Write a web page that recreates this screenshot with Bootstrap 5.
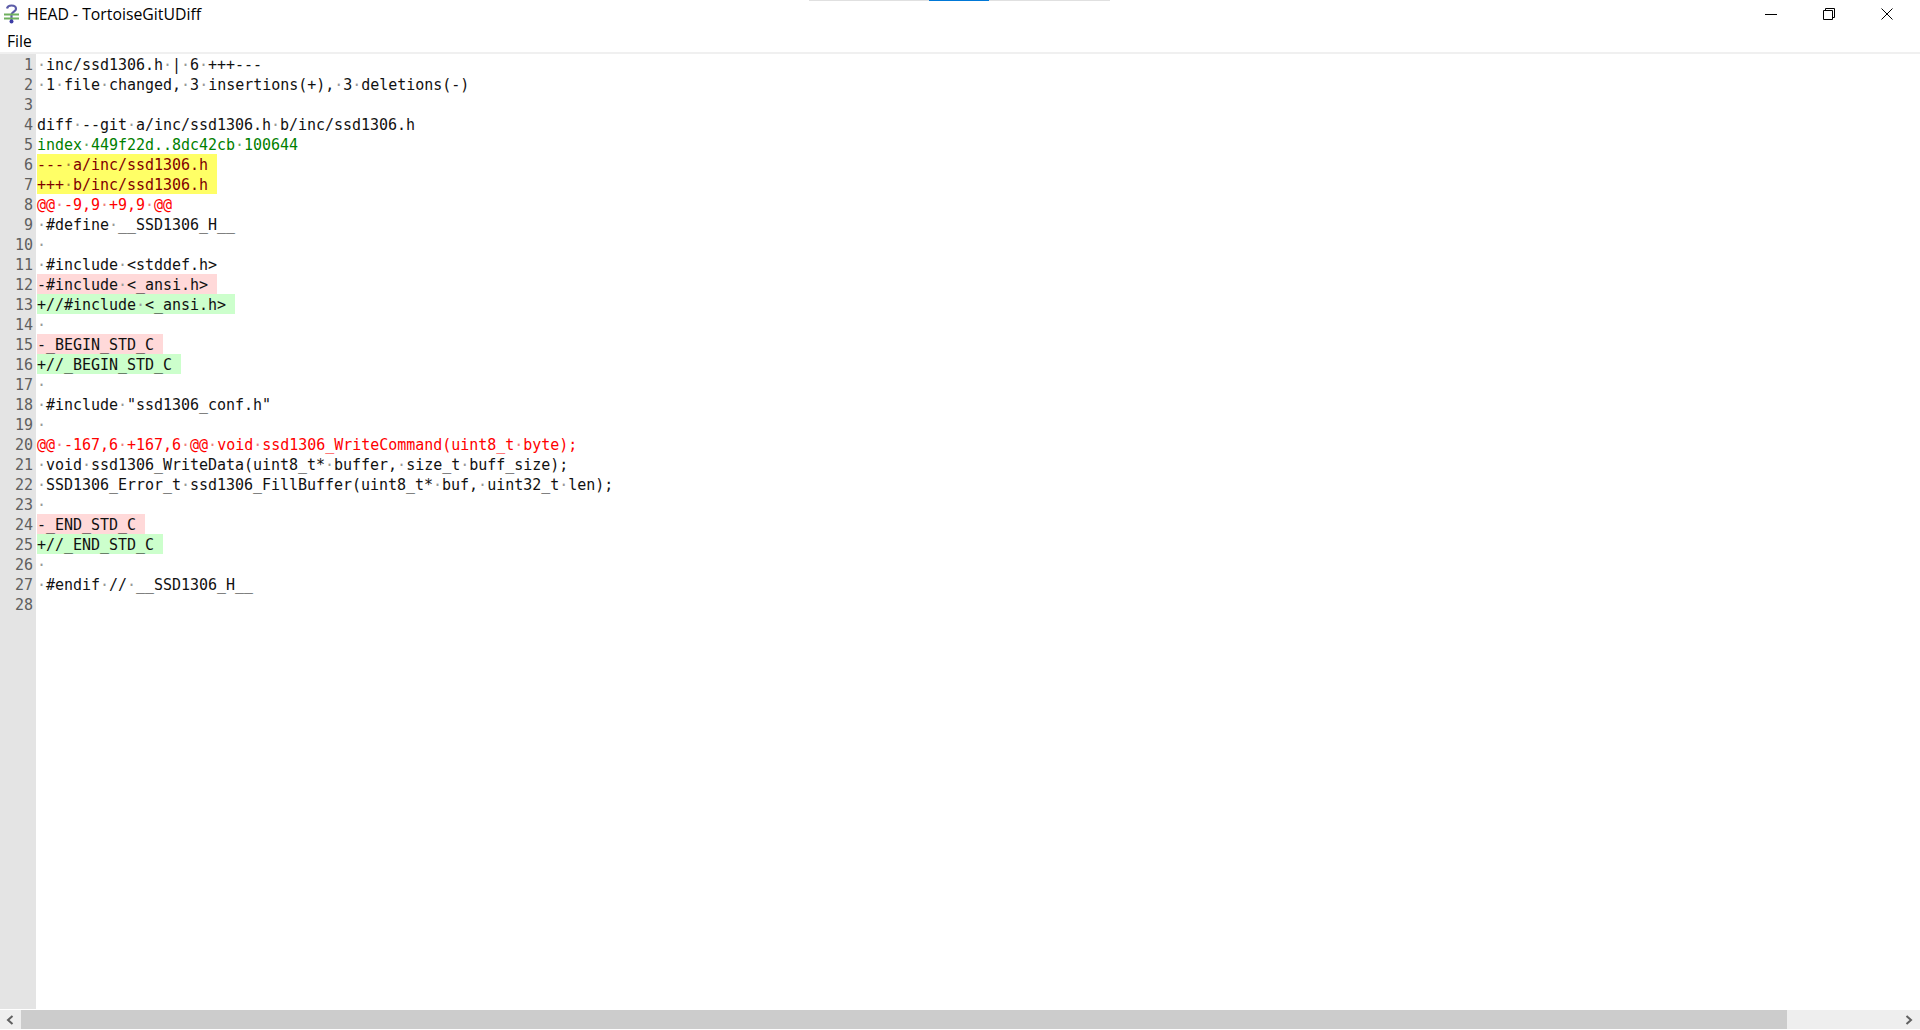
<!DOCTYPE html>
<html lang="en"><head><meta charset="utf-8"><title>HEAD - TortoiseGitUDiff</title>
<link href="https://cdn.jsdelivr.net/npm/bootstrap@5.3.0/dist/css/bootstrap.min.css" rel="stylesheet">
<style>
html,body{height:100%;margin:0;overflow:hidden;background:#fff}
.win{height:1030px;font-family:"Open Sans","Noto Sans",sans-serif;color:#000}
.accent{height:1px;width:301px;left:809px;top:0;background:#e0e0e0}
.accent i{display:block;height:1px;width:60px;margin-left:120px;background:#0078d7}
.titlebar{height:28px;font-size:15.8px;padding-left:3px;padding-right:4px}
.titletxt{margin-left:7px;line-height:28px}
.wbtn{width:58px;height:28px}
.menubar{height:24px;font-size:15.7px;padding-left:7px;line-height:26px}
.sep{height:2px;background:#f0f0f0}
.editor{height:955px}
.gutter{width:36px;background:#e4e4e4}
.ln{height:20px;padding-top:1px;text-align:right;padding-right:3px;font:15px/20px "DejaVu Sans Mono",monospace;color:#5f5f5f;letter-spacing:-.03px}
.code{padding-left:1px;font:15px/20px "DejaVu Sans Mono",monospace;color:#111;letter-spacing:-.03px}
.cl{height:20px;white-space:pre}
.cl>span{display:inline-block;height:20px;padding-top:1px;padding-right:9px;vertical-align:top}
.d{color:#999;font-weight:400}
.h-idx{color:#008000}.h-idx .d{color:#6aa96a}
.h-file{background:#ffff66;color:#800000}.h-file .d{color:#a08040}
.h-hunk{color:#f00}.h-hunk .d{color:#f08080}
.h-del{background:#ffd9d9}
.h-add{background:#ccffcc}
.gapline{height:1px}
.hscroll{height:19px;background:#eee}
.sbtn{width:21px;height:19px}
.sbtn-l{padding-right:2px}
.sbtn-r{padding-right:2px}
.thumb{width:1766px;height:19px;background:#ccc}
</style></head>
<body>
<div class="win d-flex flex-column position-relative">
<div class="accent position-absolute"><i></i></div>
<div class="titlebar d-flex align-items-center">
<svg width="17" height="20" viewBox="0 0 17 20" class="flex-shrink-0"><path d="M4 4.500C4.500 2 7 1.500 8.500 1.500c3 0 4.500 1.700 4.500 3.500 0 2.500-4.500 3-4.500 6v5" fill="none" stroke="#5c5ca8" stroke-width="2.200"/><path d="M1 10.500h15M1 14.500h15" stroke="#6fb05f" stroke-width="2"/><circle cx="8.500" cy="17.500" r="2" fill="#3c3ca6"/></svg>
<span class="titletxt flex-grow-1">HEAD - TortoiseGitUDiff</span>
<div class="d-flex">
<div class="wbtn d-flex align-items-center justify-content-center"><svg width="12" height="12" viewBox="0 0 12 12"><path d="M0 6.500h12" stroke="#000"/></svg></div>
<div class="wbtn d-flex align-items-center justify-content-center"><svg width="12" height="12" viewBox="0 0 12 12" fill="none" stroke="#000"><path d="M.5 2.500h9v9h-9zM2.500 2.500v-2h9v9h-2"/></svg></div>
<div class="wbtn d-flex align-items-center justify-content-center"><svg width="12" height="12" viewBox="0 0 12 12" fill="none" stroke="#000"><path d="M.5.5l11 11M11.500.5l-11 11"/></svg></div>
</div></div>
<div class="menubar">File</div>
<div class="sep"></div>
<div class="editor d-flex">
<div class="gutter">
<div class="ln">1</div><div class="ln">2</div><div class="ln">3</div><div class="ln">4</div><div class="ln">5</div><div class="ln">6</div><div class="ln">7</div><div class="ln">8</div><div class="ln">9</div><div class="ln">10</div><div class="ln">11</div><div class="ln">12</div><div class="ln">13</div><div class="ln">14</div><div class="ln">15</div><div class="ln">16</div><div class="ln">17</div><div class="ln">18</div><div class="ln">19</div><div class="ln">20</div><div class="ln">21</div><div class="ln">22</div><div class="ln">23</div><div class="ln">24</div><div class="ln">25</div><div class="ln">26</div><div class="ln">27</div><div class="ln">28</div>
</div>
<div class="code flex-grow-1">
<div class="cl"><span><b class="d">·</b>inc/ssd1306.h<b class="d">·</b>|<b class="d">·</b>6<b class="d">·</b>+++---</span></div>
<div class="cl"><span><b class="d">·</b>1<b class="d">·</b>file<b class="d">·</b>changed,<b class="d">·</b>3<b class="d">·</b>insertions(+),<b class="d">·</b>3<b class="d">·</b>deletions(-)</span></div>
<div class="cl"></div>
<div class="cl"><span>diff<b class="d">·</b>--git<b class="d">·</b>a/inc/ssd1306.h<b class="d">·</b>b/inc/ssd1306.h</span></div>
<div class="cl"><span class="h-idx">index<b class="d">·</b>449f22d..8dc42cb<b class="d">·</b>100644</span></div>
<div class="cl"><span class="h-file">---<b class="d">·</b>a/inc/ssd1306.h</span></div>
<div class="cl"><span class="h-file">+++<b class="d">·</b>b/inc/ssd1306.h</span></div>
<div class="cl"><span class="h-hunk">@@<b class="d">·</b>-9,9<b class="d">·</b>+9,9<b class="d">·</b>@@</span></div>
<div class="cl"><span><b class="d">·</b>#define<b class="d">·</b>__SSD1306_H__</span></div>
<div class="cl"><span><b class="d">·</b></span></div>
<div class="cl"><span><b class="d">·</b>#include<b class="d">·</b>&lt;stddef.h&gt;</span></div>
<div class="cl"><span class="h-del">-#include<b class="d">·</b>&lt;_ansi.h&gt;</span></div>
<div class="cl"><span class="h-add">+//#include<b class="d">·</b>&lt;_ansi.h&gt;</span></div>
<div class="cl"><span><b class="d">·</b></span></div>
<div class="cl"><span class="h-del">-_BEGIN_STD_C</span></div>
<div class="cl"><span class="h-add">+//_BEGIN_STD_C</span></div>
<div class="cl"><span><b class="d">·</b></span></div>
<div class="cl"><span><b class="d">·</b>#include<b class="d">·</b>"ssd1306_conf.h"</span></div>
<div class="cl"><span><b class="d">·</b></span></div>
<div class="cl"><span class="h-hunk">@@<b class="d">·</b>-167,6<b class="d">·</b>+167,6<b class="d">·</b>@@<b class="d">·</b>void<b class="d">·</b>ssd1306_WriteCommand(uint8_t<b class="d">·</b>byte);</span></div>
<div class="cl"><span><b class="d">·</b>void<b class="d">·</b>ssd1306_WriteData(uint8_t*<b class="d">·</b>buffer,<b class="d">·</b>size_t<b class="d">·</b>buff_size);</span></div>
<div class="cl"><span><b class="d">·</b>SSD1306_Error_t<b class="d">·</b>ssd1306_FillBuffer(uint8_t*<b class="d">·</b>buf,<b class="d">·</b>uint32_t<b class="d">·</b>len);</span></div>
<div class="cl"><span><b class="d">·</b></span></div>
<div class="cl"><span class="h-del">-_END_STD_C</span></div>
<div class="cl"><span class="h-add">+//_END_STD_C</span></div>
<div class="cl"><span><b class="d">·</b></span></div>
<div class="cl"><span><b class="d">·</b>#endif<b class="d">·</b>//<b class="d">·</b>__SSD1306_H__</span></div>
</div>
</div>
<div class="gapline"></div>
<div class="hscroll d-flex">
<div class="sbtn sbtn-l d-flex align-items-center justify-content-center"><svg width="8" height="10" viewBox="0 0 8 10"><path d="M6.500 1L2 5l4.500 4" fill="none" stroke="#606060" stroke-width="2"/></svg></div>
<div class="thumb"></div>
<div class="flex-grow-1"></div>
<div class="sbtn sbtn-r d-flex align-items-center justify-content-center"><svg width="8" height="10" viewBox="0 0 8 10"><path d="M1.500 1L6 5 1.500 9" fill="none" stroke="#606060" stroke-width="2"/></svg></div>
</div>
</div>
</body></html>
